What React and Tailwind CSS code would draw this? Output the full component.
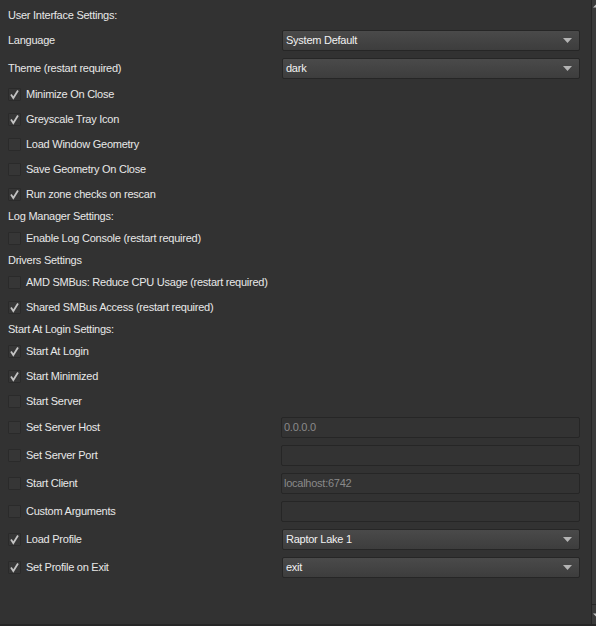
import React from "react";

const Check = ({ on }) => (
  <span className="w-[13px] h-[13px] mr-[5px] border border-[#2a2a2a] bg-[#363636] rounded-[1px] flex items-center justify-center shrink-0">
    {on && (
      <svg width="11" height="11" viewBox="0 0 11 11">
        <path d="M2 5.6 L4.3 9 L9 1.6" fill="none" stroke="#c4c4c4" strokeWidth="1.8" />
      </svg>
    )}
  </span>
);

const Combo = ({ value }) => (
  <div className="ml-[1px] w-[298px] h-[21px] rounded-[2px] border border-[#262626] bg-gradient-to-b from-[#4a4a4a] to-[#3d3d3d] flex items-center pl-[3px] pr-[7px] text-[#f2f2f2]">
    <span className="flex-1">{value}</span>
    <svg width="9" height="5" viewBox="0 0 9 5">
      <path d="M0 0 L9 0 L4.5 5 Z" fill="#b4b4b4" />
    </svg>
  </div>
);

const Field = ({ value }) => (
  <div className="w-[299px] h-[21px] rounded-[2px] border border-[#262626] bg-[#333333] flex items-center pl-[2px] text-[#8a8a8a]">
    {value}
  </div>
);

const ROWS = [
  { h: 25, head: "User Interface Settings:" },
  { h: 28, label: "Language", combo: "System Default" },
  { h: 26, label: "Theme (restart required)", combo: "dark" },
  { h: 25, check: true, label: "Minimize On Close" },
  { h: 25, check: true, label: "Greyscale Tray Icon" },
  { h: 25, check: false, label: "Load Window Geometry" },
  { h: 25, check: false, label: "Save Geometry On Close" },
  { h: 22, check: true, label: "Run zone checks on rescan" },
  { h: 22, head: "Log Manager Settings:" },
  { h: 22, check: false, label: "Enable Log Console (restart required)" },
  { h: 22, head: "Drivers Settings" },
  { h: 25, check: false, label: "AMD SMBus: Reduce CPU Usage (restart required)" },
  { h: 22, check: true, label: "Shared SMBus Access (restart required)" },
  { h: 22, head: "Start At Login Settings:" },
  { h: 25, check: true, label: "Start At Login" },
  { h: 25, check: true, label: "Start Minimized" },
  { h: 26, check: false, label: "Start Server" },
  { h: 28, check: false, label: "Set Server Host", field: "0.0.0.0" },
  { h: 28, check: false, label: "Set Server Port", field: "" },
  { h: 28, check: false, label: "Start Client", field: "localhost:6742" },
  { h: 28, check: false, label: "Custom Arguments", field: "" },
  { h: 28, check: true, label: "Load Profile", combo: "Raptor Lake 1" },
  { h: 28, check: true, label: "Set Profile on Exit", combo: "exit" },
];

export default function App() {
  return (
    <div
      className="w-[596px] h-[626px] bg-[#323232] text-[#e8e8e8] text-[11px] tracking-[-0.25px] flex flex-col overflow-hidden"
      style={{ fontFamily: '"Liberation Sans", Arial, sans-serif' }}
    >
      <div className="flex flex-1 min-h-0">
        {/* settings list */}
        <div className="w-[591px] pl-[8px] pt-[4px] flex flex-col">
          {ROWS.map((r, i) => (
            <div key={i} className="shrink-0" style={{ height: r.h }}>
              <div className="h-[22px] flex items-center">
                <div className="w-[273px] flex items-center">
                  {r.check !== undefined && <Check on={r.check} />}
                  <span className="whitespace-nowrap">{r.head || r.label}</span>
                </div>
                {r.combo && <Combo value={r.combo} />}
                {r.field !== undefined && <Field value={r.field} />}
              </div>
            </div>
          ))}
        </div>

        {/* scrollbar */}
        <div className="w-[5px] border-l border-[#262626] bg-[#3a3a3a] flex flex-col justify-between">
          <div className="h-[12px] flex items-center pl-[1px]">
            <svg width="4" height="4" viewBox="0 0 4 4">
              <path d="M0 4 L4 0 L4 4 Z" fill="#c0c0c0" />
            </svg>
          </div>
          <div className="h-[20px] border-t border-[#262626] flex items-center pl-[1px]">
            <svg width="4" height="4" viewBox="0 0 4 4">
              <path d="M0 0 L4 0 L4 4 Z" fill="#c0c0c0" />
            </svg>
          </div>
        </div>
      </div>
      <div className="h-[2px] bg-[#262626]" />
    </div>
  );
}
